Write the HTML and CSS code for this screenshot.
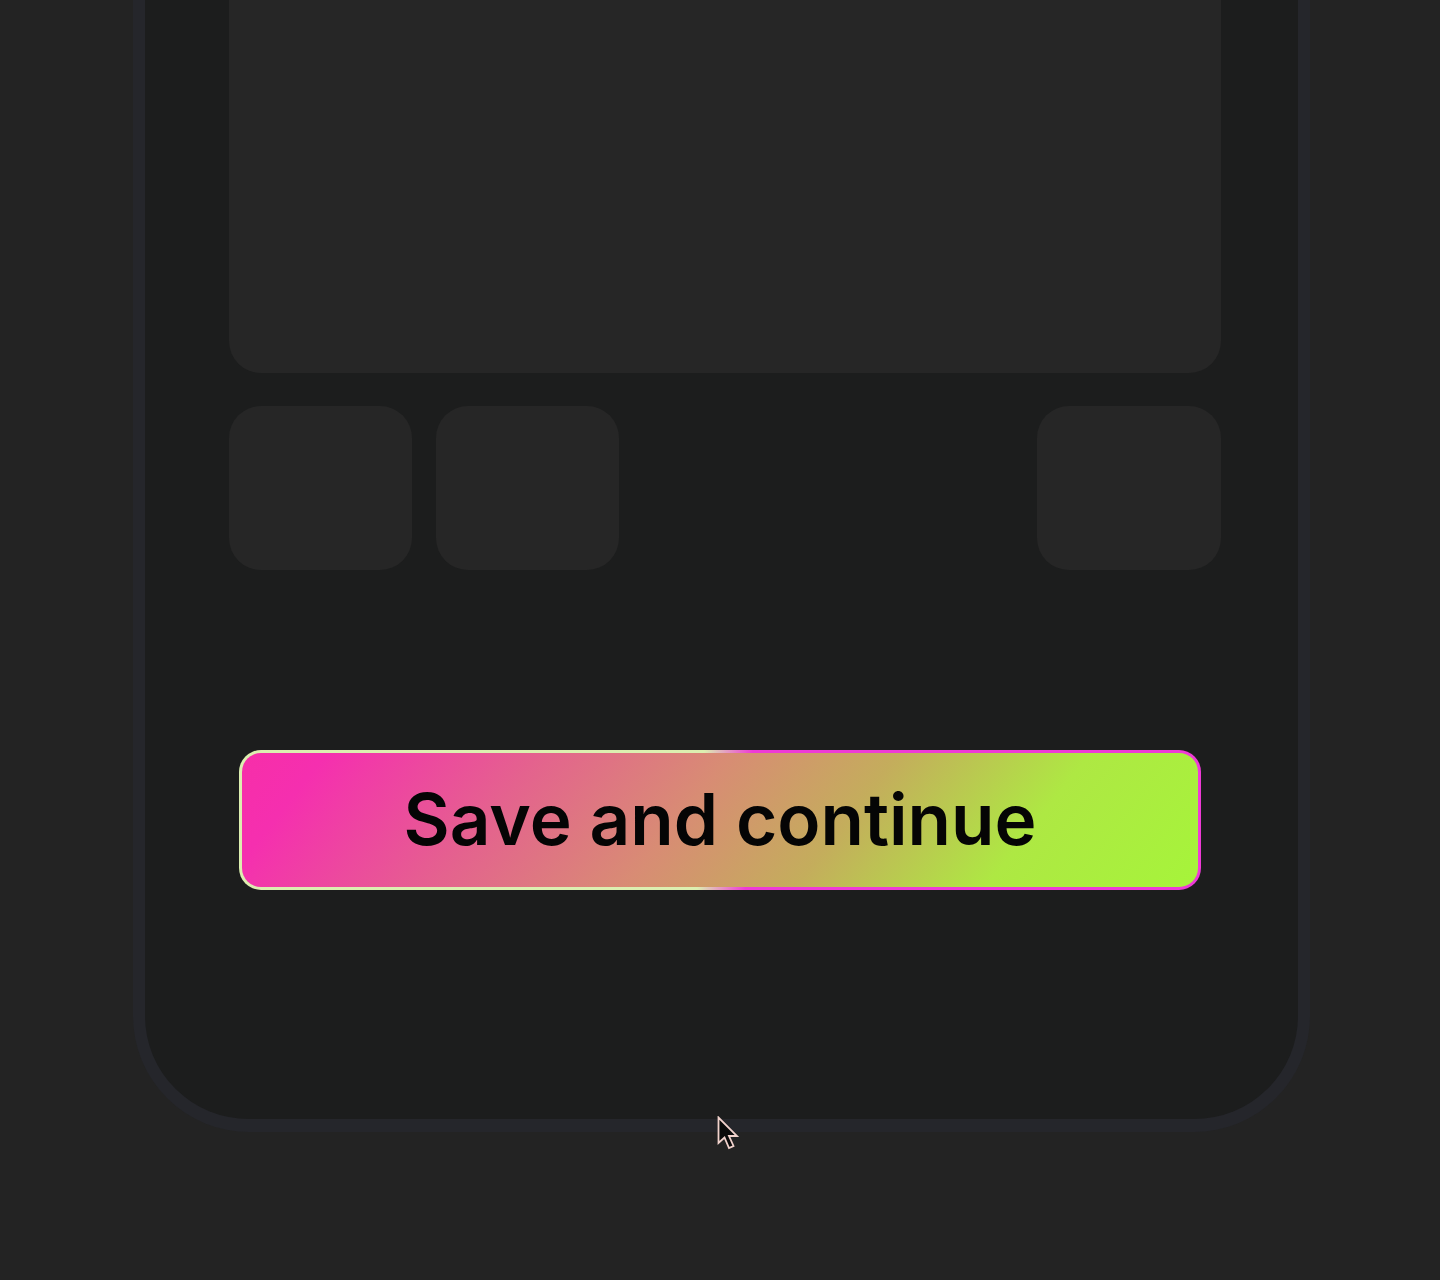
FILE: index.html
```html
<!DOCTYPE html>
<html lang="en">
<head>
<meta charset="utf-8">
<title>Save and continue</title>
<link rel="stylesheet" href="styles.css">
</head>
<body>
<div class="stage">
  <div class="phone">
    <div class="hero-card"></div>
    <div class="tiles">
      <div class="tile"></div>
      <div class="tile"></div>
      <div class="tile tile-end"></div>
    </div>
    <button class="cta" type="button">Save and continue</button>
  </div>
  <svg class="cursor" width="24" height="36" viewBox="0 0 24 36" aria-hidden="true">
    <path d="M1.5 1.5 L1.5 27 L7.5 21.5 L12 32 L16.5 30 L12 20 L20 20 Z" fill="#0a0a0a" stroke="#f1d2cc" stroke-width="1.8" stroke-linejoin="miter"/>
  </svg>
</div>
</body>
</html>
```
FILE: styles.css
```css
html, body {
  margin: 0;
  padding: 0;
  background: #232323;
  font-family: "Inter", "Liberation Sans", sans-serif;
}

.stage {
  position: relative;
  width: 1440px;
  height: 1280px;
  overflow: hidden;
}

.phone {
  box-sizing: border-box;
  margin-left: 133px;
  width: 1177px;
  height: 1132px;
  background: #1c1d1d;
  border: 12px solid #25262b;
  border-bottom-width: 13px;
  border-top: 0;
  border-radius: 0 0 116px 116px;
  padding: 0 77px 0 84px;
  display: flex;
  flex-direction: column;
}

.hero-card {
  height: 373px;
  background: #262626;
  border-radius: 0 0 32px 32px;
}

.tiles {
  margin-top: 33px;
  display: flex;
  gap: 24px;
}

.tile {
  width: 183px;
  height: 164px;
  background: #262626;
  border-radius: 32px;
}

.tile-end {
  margin-left: auto;
  width: 184px;
}

.cta {
  margin: 180px 20px 0 10px;
  height: 140px;
  border: 3px solid transparent;
  border-radius: 22px;
  background:
    linear-gradient(128deg, #f72ea9 0%, #f52faf 8%, #e4628e 28%, #d88c74 46%, #c4ad5c 62%, #aee843 80%, #a6f43a 100%) padding-box,
    linear-gradient(93deg, #dcefb0 0%, #dcefb0 48%, #ee3ad6 53%, #ee3ad6 100%) border-box;
  color: #050505;
  font-family: "Inter", "Liberation Sans", sans-serif;
  font-weight: 600;
  font-size: 71px;
  letter-spacing: 0;
  line-height: 1;
  padding: 2px 0 4px;
  cursor: pointer;
}

.cursor {
  position: absolute;
  left: 717px;
  top: 1116px;
}
```
